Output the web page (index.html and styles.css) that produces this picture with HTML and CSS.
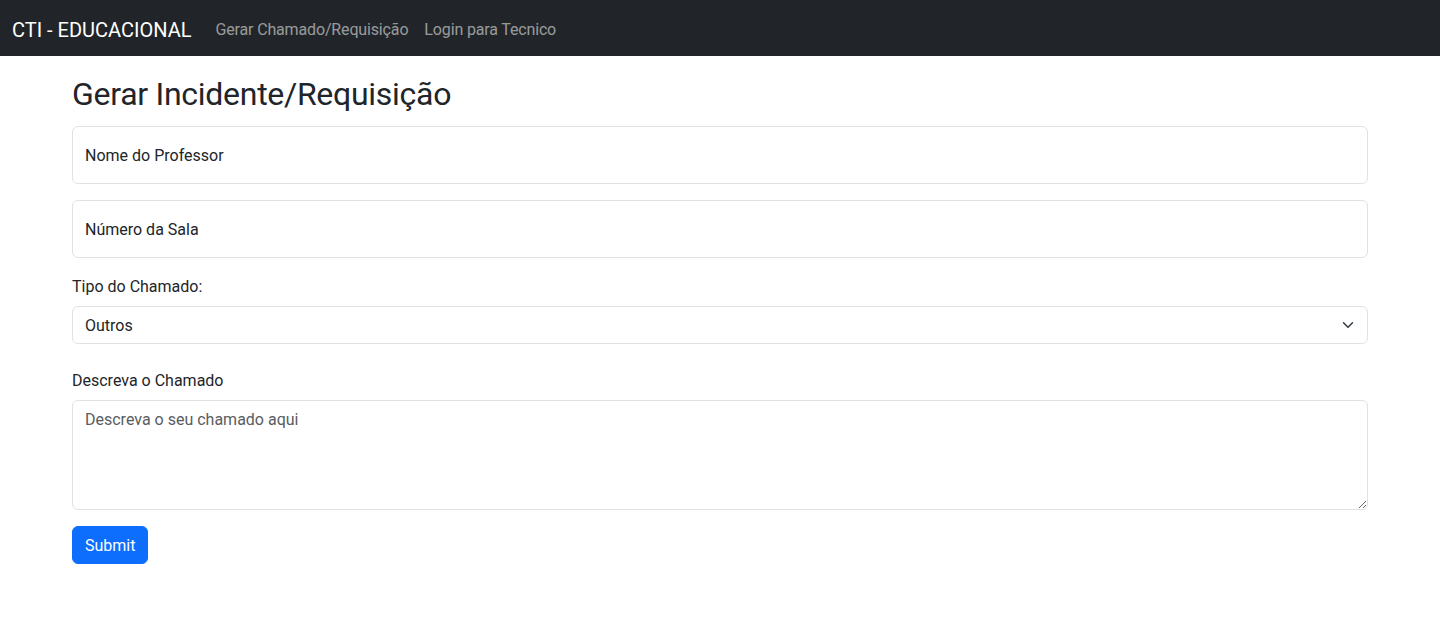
FILE: index.html
```html
<!DOCTYPE html>
<html lang="pt-BR">
<head>
<meta charset="utf-8">
<title>CTI - EDUCACIONAL</title>
<link rel="stylesheet" href="styles.css">
</head>
<body>
<nav class="navbar">
  <div class="navbar-inner">
    <a class="brand" href="#">CTI - EDUCACIONAL</a>
    <ul class="nav">
      <li><a class="nav-link" href="#">Gerar Chamado/Requisição</a></li>
      <li><a class="nav-link" href="#">Login para Tecnico</a></li>
    </ul>
  </div>
</nav>
<main class="container">
  <h2 class="title">Gerar Incidente/Requisição</h2>
  <form class="form">
    <div class="floating">
      <input class="control floating-input" type="text" id="nome">
      <label class="floating-label" for="nome">Nome do Professor</label>
    </div>
    <div class="floating">
      <input class="control floating-input" type="text" id="sala">
      <label class="floating-label" for="sala">Número da Sala</label>
    </div>
    <div class="group">
      <label class="form-label" for="tipo">Tipo do Chamado:</label>
      <div class="select-wrap">
        <select class="control select" id="tipo">
          <option>Outros</option>
        </select>
        <svg class="select-arrow" width="16" height="12" viewBox="0 0 16 16" fill="none" stroke="#343a40" stroke-width="2" stroke-linecap="round" stroke-linejoin="round"><path d="m2 5 6 6 6-6"/></svg>
      </div>
    </div>
    <div class="group group-text">
      <label class="form-label" for="desc">Descreva o Chamado</label>
      <textarea class="control textarea" id="desc" rows="4" placeholder="Descreva o seu chamado aqui"></textarea>
    </div>
    <button class="btn" type="button">Submit</button>
  </form>
</main>
</body>
</html>
```
FILE: styles.css
```css
* { box-sizing: border-box; }
html, body { margin: 0; padding: 0; }
body {
  font-family: Roboto, "Noto Sans", "Liberation Sans", sans-serif;
  font-size: 16px;
  line-height: 1.5;
  color: #212529;
  background: #fff;
}
.navbar {
  background: #212529;
  height: 56px;
  padding: 10px 0 6px;
}
.navbar-inner {
  display: flex;
  align-items: center;
  height: 40px;
  padding: 0 12px;
}
.brand {
  font-size: 20px;
  line-height: 30px;
  color: #fff;
  text-decoration: none;
  margin-right: 16px;
}
.nav {
  display: flex;
  list-style: none;
  margin: 0;
  padding: 0;
}
.nav-link {
  display: block;
  padding: 8px;
  color: rgba(255, 255, 255, 0.55);
  text-decoration: none;
  letter-spacing: -0.15px;
}
.container {
  max-width: 1320px;
  margin: 0 auto;
  padding: 19px 12px 0;
}
.title {
  margin: 0 0 13px;
  font-size: 32px;
  font-weight: 400;
  line-height: 1.2;
  letter-spacing: -0.28px;
}
.control {
  display: block;
  width: 100%;
  font-family: inherit;
  font-size: 16px;
  line-height: 1.5;
  color: #212529;
  background: #fff;
  border: 1px solid #dee2e6;
  border-radius: 6px;
  padding: 7px 12px 5px;
  margin: 0;
}
.floating {
  position: relative;
  margin-bottom: 16px;
}
.floating-input {
  height: 58px;
  padding: 16px 12px;
}
.floating-label {
  position: absolute;
  top: 0;
  left: 0;
  height: 100%;
  padding: 17px 12px 15px;
  border: 1px solid transparent;
  pointer-events: none;
  color: #212529;
}
.group { margin-bottom: 24px; }
.group-text { margin-bottom: 16px; }
.form-label {
  display: block;
  padding-top: 1px;
  margin-bottom: 7px;
}
.select-wrap { position: relative; }
.select {
  appearance: none;
  -webkit-appearance: none;
  height: 38px;
  padding-right: 36px;
}
.select-arrow {
  position: absolute;
  right: 12px;
  top: 13px;
  pointer-events: none;
}
.textarea {
  height: 110px;
  resize: vertical;
}
.textarea::placeholder { color: #595c5f; opacity: 1; }
.btn {
  font-family: inherit;
  font-size: 16px;
  line-height: 1.5;
  color: #fff;
  background: #0d6efd;
  border: 1px solid #0d6efd;
  border-radius: 6px;
  padding: 7px 12px 5px;
  cursor: pointer;
}
```
